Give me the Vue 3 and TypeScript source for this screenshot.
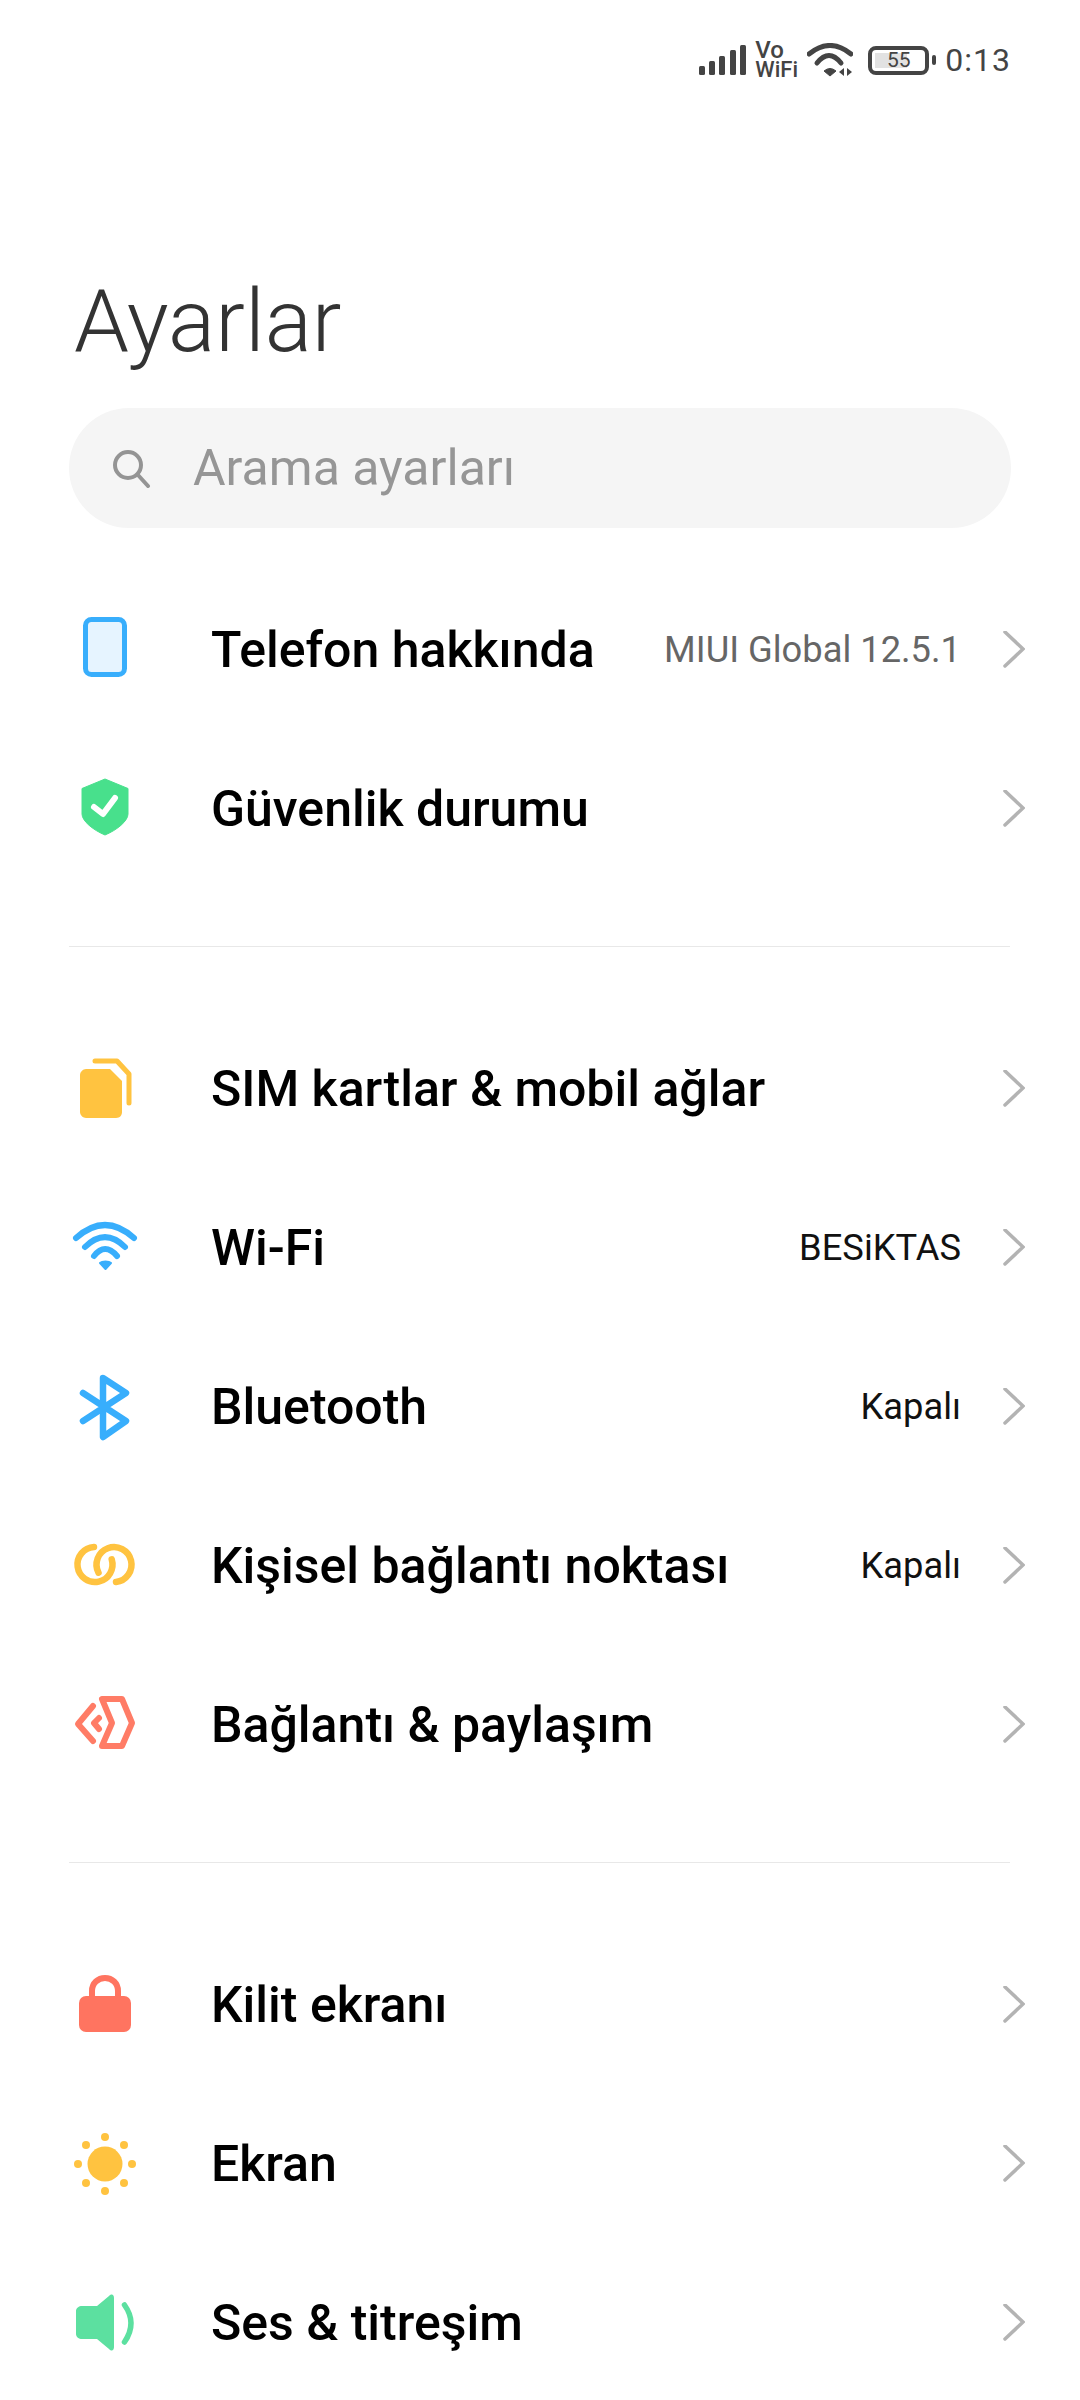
<script setup lang="ts">
interface SettingRow {
  id: string
  title: string
  value?: string
  valueMuted?: boolean
}

const groups: SettingRow[][] = [
  [
    { id: 'phone', title: 'Telefon hakkında', value: 'MIUI Global 12.5.1', valueMuted: true },
    { id: 'shield', title: 'Güvenlik durumu' }
  ],
  [
    { id: 'sim', title: 'SIM kartlar & mobil ağlar' },
    { id: 'wifi', title: 'Wi-Fi', value: 'BESiKTAS' },
    { id: 'bluetooth', title: 'Bluetooth', value: 'Kapalı' },
    { id: 'hotspot', title: 'Kişisel bağlantı noktası', value: 'Kapalı' },
    { id: 'share', title: 'Bağlantı & paylaşım' }
  ],
  [
    { id: 'lock', title: 'Kilit ekranı' },
    { id: 'display', title: 'Ekran' },
    { id: 'sound', title: 'Ses & titreşim' }
  ]
]
</script>

<template>
  <div class="screen">
    <div class="status-bar">
      <svg class="signal" width="47" height="30" viewBox="0 0 47 30">
        <rect x="0" y="21" width="6" height="9" rx="1.5" />
        <rect x="10" y="16" width="6" height="14" rx="1.5" />
        <rect x="20" y="11" width="6" height="19" rx="1.5" />
        <rect x="31" y="5" width="6" height="25" rx="1.5" />
        <rect x="41" y="0" width="6" height="30" rx="1.5" />
      </svg>
      <div class="vowifi"><span class="vo">Vo</span><span class="wf">WiFi</span></div>
      <svg class="wifi-status" width="46" height="34" viewBox="0 0 46 34" fill="none" stroke="#444" stroke-width="5">
        <path d="M2 11Q23 -6 44 11" stroke-linecap="round" />
        <path d="M10 20Q22 5 34 20" stroke-linecap="round" />
        <path d="M17 28Q23 23 29 28L23 33Z" fill="#444" stroke-width="1" stroke-linejoin="round" />
        <path d="M37 25V33L32 29ZM40 25V33L45 29Z" fill="#444" stroke="none" />
      </svg>
      <div class="battery">
        <div class="battery-body">
          <div class="battery-fill"></div>
          <span>55</span>
        </div>
        <div class="battery-tip"></div>
      </div>
      <span class="clock">0:13</span>
    </div>

    <h1 class="page-title">Ayarlar</h1>

    <div class="search">
      <svg width="40" height="40" viewBox="0 0 40 40" fill="none" stroke="#949494" stroke-width="4">
        <circle cx="17" cy="17" r="13" />
        <path d="M27 27L37 38" stroke-linecap="round" />
      </svg>
      <span class="search-text">Arama ayarları</span>
    </div>

    <template v-for="(group, index) in groups" :key="index">
      <div v-if="index > 0" class="divider"></div>
      <div class="group">
        <div v-for="row in group" :key="row.id" class="row">
          <div class="row-icon">
            <svg width="72" height="72" viewBox="0 0 72 72">
              <template v-if="row.id === 'phone'">
                <rect x="16.500" y="5.500" width="39" height="55" rx="6" fill="#e6f4ff" stroke="#38aefc" stroke-width="5" />
              </template>
              <template v-else-if="row.id === 'shield'">
                <path d="M36 6L59 15.500V41C59 48 48 57 36 62C24 57 13 48 13 41V15.500Z" fill="#48e08c" stroke="#48e08c" stroke-width="1" stroke-linejoin="round" />
                <path d="M25 34L34 41L46 25" fill="none" stroke="#fff" stroke-width="6" stroke-linecap="round" stroke-linejoin="round" />
              </template>
              <template v-else-if="row.id === 'sim'">
                <path d="M17 16H41L53 28V59C53 62 51 65 47 65H17C14 65 11 62 11 59V22C11 19 14 16 17 16Z" fill="#ffc340" />
                <path d="M26 8H48L60 21V50" fill="none" stroke="#ffc340" stroke-width="5" stroke-linecap="round" stroke-linejoin="round" />
              </template>
              <template v-else-if="row.id === 'wifi'">
                <g fill="none" stroke="#38aefc" stroke-width="6" stroke-linecap="round">
                  <path d="M7 26Q36 0 65 26" />
                  <path d="M16 35Q36 15 56 35" />
                  <path d="M25 44Q36 30 48 44" />
                </g>
                <path d="M31 51C33 49 40 49 42 51L36.500 57Z" fill="#38aefc" stroke="#38aefc" stroke-width="2" stroke-linejoin="round" />
              </template>
              <template v-else-if="row.id === 'bluetooth'">
                <path d="M14 22L57 50L34 66V7L57 22L14 50" fill="none" stroke="#38aefc" stroke-width="6.500" stroke-linecap="round" stroke-linejoin="round" />
              </template>
              <template v-else-if="row.id === 'hotspot'">
                <g fill="none" stroke="#ffc340" stroke-width="6.500" stroke-linecap="round">
                  <path d="M25 17A17.500 17.500 0 1 0 42.700 29.300" />
                  <path d="M47 52A17.500 17.500 0 1 0 29.500 42.700" />
                </g>
              </template>
              <template v-else-if="row.id === 'share'">
                <g fill="none" stroke="#ff7c66" stroke-width="6" stroke-linecap="round" stroke-linejoin="round">
                  <path d="M24 17L9 35L24 52" />
                  <path d="M33 10H53L63 34L53 57H33L43 34Z" />
                  <path d="M30 29L25 34L30 40" />
                </g>
              </template>
              <template v-else-if="row.id === 'lock'">
                <rect x="10" y="27" width="52" height="36" rx="7" fill="#ff7460" />
                <path d="M23 29V22C23 14 29 9 36 9C43 9 49 14 49 22V29" fill="none" stroke="#ff7460" stroke-width="6" />
              </template>
              <template v-else-if="row.id === 'display'">
                <g fill="#ffc340">
                  <circle cx="36" cy="36" r="17.500" />
                  <circle cx="36" cy="9" r="4" />
                  <circle cx="36" cy="63" r="4" />
                  <circle cx="9" cy="36" r="4" />
                  <circle cx="63" cy="36" r="4" />
                  <circle cx="17" cy="17" r="4" />
                  <circle cx="55" cy="17" r="4" />
                  <circle cx="17" cy="55" r="4" />
                  <circle cx="55" cy="55" r="4" />
                </g>
              </template>
              <template v-else-if="row.id === 'sound'">
                <path d="M13 19H28L40 9C43 6 45 8 45 11V60C45 63 43 65 40 62L28 52H13C10 52 7 50 7 47V24C7 21 10 19 13 19Z" fill="#5ce0a0" />
                <path d="M55.500 18Q68.500 36 55.500 55" fill="none" stroke="#5ce0a0" stroke-width="5.500" stroke-linecap="round" />
              </template>
            </svg>
          </div>
          <span class="row-title">{{ row.title }}</span>
          <span v-if="row.value" class="row-value" :class="{ muted: row.valueMuted }">{{ row.value }}</span>
          <svg class="chevron" width="22" height="38" viewBox="0 0 22 38" fill="none" stroke="#b3b3b3" stroke-width="3.500" stroke-linecap="round">
            <path d="M2 1L20 18L2 35" />
          </svg>
        </div>
      </div>
    </template>
  </div>
</template>

<style scoped>
.screen {
  width: 1080px;
  height: 2400px;
  overflow: hidden;
  background: #fff;
  font-family: Roboto, "Noto Sans", sans-serif;
}

.status-bar {
  display: flex;
  justify-content: flex-end;
  align-items: center;
  height: 36px;
  padding: 42px 69px 0 0;
  color: #444;
}

.signal {
  fill: #444;
  margin-right: 9px;
}

.vowifi {
  display: flex;
  flex-direction: column;
  width: 42px;
  font-weight: 500;
  margin-right: 10px;
}

.vo {
  font-size: 24px;
  line-height: 20px;
}

.wf {
  font-size: 22px;
  line-height: 20px;
}

.wifi-status {
  margin-right: 15px;
}

.battery {
  display: flex;
  align-items: center;
  margin-right: 9px;
}

.battery-body {
  position: relative;
  box-sizing: border-box;
  display: flex;
  align-items: center;
  justify-content: center;
  width: 61px;
  height: 29px;
  border: 4px solid #444;
  border-radius: 8px;
  font-size: 21px;
}

.battery-body span {
  position: relative;
}

.battery-fill {
  position: absolute;
  left: 3px;
  top: 3px;
  bottom: 3px;
  width: 32px;
  background: #e2e2e2;
}

.battery-tip {
  width: 4px;
  height: 10px;
  margin-left: 3px;
  border-radius: 2px;
  background: #444;
}

.clock {
  font-size: 32px;
  letter-spacing: 1px;
}

.page-title {
  margin: 0;
  padding: 189px 0 0 74px;
  font-size: 88px;
  line-height: 108px;
  font-weight: 300;
  color: #333;
}

.search {
  display: flex;
  align-items: center;
  gap: 42px;
  height: 120px;
  margin: 33px 69px 0;
  padding-left: 42px;
  border-radius: 60px;
  background: #f5f5f5;
}

.search-text {
  font-size: 50px;
  color: #969696;
}

.group {
  display: flex;
  flex-direction: column;
}

.search + .group {
  margin-top: 42px;
}

.row {
  display: flex;
  align-items: center;
  height: 159px;
  padding-left: 69px;
}

.row-icon {
  width: 72px;
  height: 72px;
  margin-right: 70px;
  flex-shrink: 0;
}

.row-icon svg {
  display: block;
}

.row-title {
  font-size: 50px;
  font-weight: 500;
  color: #000;
}

.row-value {
  margin-left: auto;
  font-size: 36.3px;
  color: #111;
}

.row-value.muted {
  color: #666;
}

.chevron {
  margin-left: 42px;
  margin-right: 55px;
  flex-shrink: 0;
}

.row-title + .chevron {
  margin-left: auto;
}

.divider {
  height: 1px;
  margin: 58px 70px 62px 69px;
  background: #e8e8e8;
}
</style>

<style>
body {
  margin: 0;
  background: #fff;
}
</style>
